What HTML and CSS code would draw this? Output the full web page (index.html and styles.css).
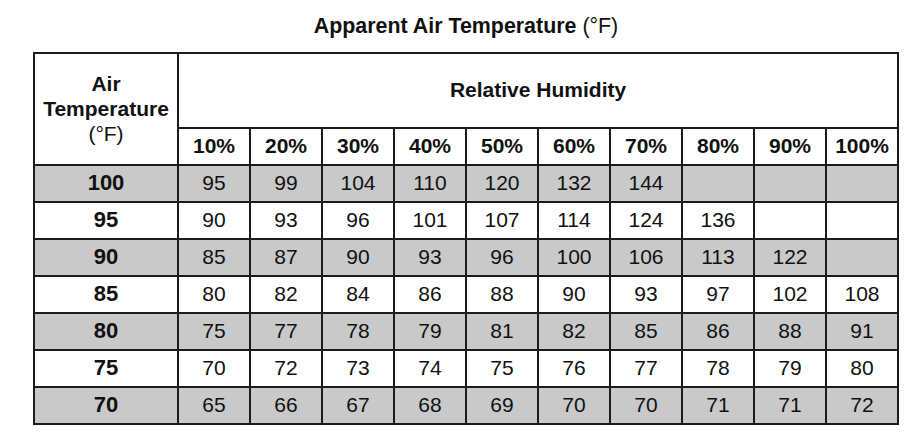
FILE: index.html
```html
<!DOCTYPE html>
<html lang="en">
<head>
<meta charset="utf-8">
<title>Apparent Air Temperature</title>
<link rel="stylesheet" href="styles.css">
</head>
<body>
<div class="page">
  <h1 class="title"><b>Apparent Air Temperature</b> <span class="unit">(°F)</span></h1>
  <table class="chart">
    <colgroup>
      <col class="c-first">
      <col class="c-val"><col class="c-val"><col class="c-val"><col class="c-val"><col class="c-val">
      <col class="c-val"><col class="c-val"><col class="c-val"><col class="c-val"><col class="c-val">
    </colgroup>
    <thead>
      <tr class="h1">
        <th rowspan="2" class="corner">Air<br>Temperature<br><span class="unit">(°F)</span></th>
        <th colspan="10">Relative Humidity</th>
      </tr>
      <tr class="h2">
        <th>10%</th><th>20%</th><th>30%</th><th>40%</th><th>50%</th>
        <th>60%</th><th>70%</th><th>80%</th><th>90%</th><th>100%</th>
      </tr>
    </thead>
    <tbody>
      <tr class="shade"><th>100</th><td>95</td><td>99</td><td>104</td><td>110</td><td>120</td><td>132</td><td>144</td><td></td><td></td><td></td></tr>
      <tr><th>95</th><td>90</td><td>93</td><td>96</td><td>101</td><td>107</td><td>114</td><td>124</td><td>136</td><td></td><td></td></tr>
      <tr class="shade"><th>90</th><td>85</td><td>87</td><td>90</td><td>93</td><td>96</td><td>100</td><td>106</td><td>113</td><td>122</td><td></td></tr>
      <tr><th>85</th><td>80</td><td>82</td><td>84</td><td>86</td><td>88</td><td>90</td><td>93</td><td>97</td><td>102</td><td>108</td></tr>
      <tr class="shade"><th>80</th><td>75</td><td>77</td><td>78</td><td>79</td><td>81</td><td>82</td><td>85</td><td>86</td><td>88</td><td>91</td></tr>
      <tr><th>75</th><td>70</td><td>72</td><td>73</td><td>74</td><td>75</td><td>76</td><td>77</td><td>78</td><td>79</td><td>80</td></tr>
      <tr class="shade"><th>70</th><td>65</td><td>66</td><td>67</td><td>68</td><td>69</td><td>70</td><td>70</td><td>71</td><td>71</td><td>72</td></tr>
    </tbody>
  </table>
</div>
</body>
</html>
```

FILE: styles.css
```css
html, body {
  margin: 0;
  padding: 0;
  background: #ffffff;
}

.page {
  padding: 15px 0 0 33px;
  font-family: "Liberation Sans", Arial, Helvetica, sans-serif;
  color: #111111;
}

.title {
  width: 866px;
  margin: 0 0 14px 0;
  text-align: center;
  font-size: 21.4px;
  line-height: 23px;
  font-weight: normal;
}

.title b {
  font-weight: bold;
}

.unit {
  font-weight: normal;
}

.chart {
  border-collapse: collapse;
  table-layout: fixed;
  width: 866px;
  font-size: 21px;
  border: 2px solid #1c1c1c;
}

.c-first {
  width: 144px;
}

.c-val {
  width: 72px;
}

.chart th,
.chart td {
  border: 2px solid #1c1c1c;
  padding: 0 0 2px 0;
  text-align: center;
  vertical-align: middle;
}

.chart th {
  font-weight: bold;
}

.chart td {
  font-weight: normal;
}

.corner {
  line-height: 25px;
}

.h1 th {
  height: 71px;
}

.h2 th {
  height: 33px;
}

.chart tbody tr th,
.chart tbody tr td {
  height: 33px;
}

.chart tbody tr th {
  font-size: 22px;
}

.shade th,
.shade td {
  background: #c9c9c9;
}
```
